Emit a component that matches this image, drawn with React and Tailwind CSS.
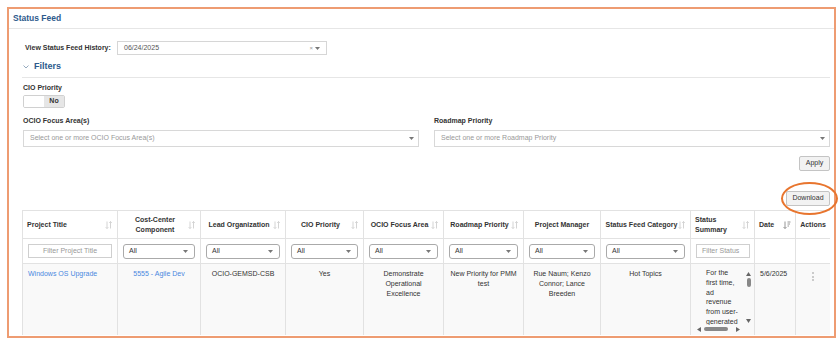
import React from 'react';

const font = "font-['Liberation_Sans',Arial,sans-serif]";

function SortIcon({ active }) {
  if (active) {
    return (
      <svg width="8" height="8" viewBox="0 0 8 8" className="shrink-0">
        <path d="M2 0.5 V7.5 M0.5 6 L2 7.5 L3.5 6" stroke="#8a8a8a" strokeWidth="0.9" fill="none" />
        <path d="M4.5 1 H7.5 M4.5 3 H7 M4.5 5 H6" stroke="#8a8a8a" strokeWidth="0.9" fill="none" />
      </svg>
    );
  }
  return (
    <svg width="8" height="8" viewBox="0 0 8 8" className="shrink-0">
      <path d="M2 0.5 V7.5 M0.7 6.2 L2 7.5 L3.3 6.2" stroke="#cfcfcf" strokeWidth="0.9" fill="none" />
      <path d="M5.5 7.5 V0.5 M4.2 1.8 L5.5 0.5 L6.8 1.8" stroke="#cfcfcf" strokeWidth="0.9" fill="none" />
    </svg>
  );
}

function Caret() {
  return (
    <svg width="5" height="3" viewBox="0 0 5 3">
      <path d="M0 0 H5 L2.5 3 Z" fill="#777" />
    </svg>
  );
}

function SelectAll() {
  return (
    <div className="mx-[5px] h-[15px] border border-[#aaa] rounded-[3px] bg-white flex items-center justify-between pl-[5px] pr-[6px]">
      <span className="text-[7px] text-[#333]">All</span>
      <Caret />
    </div>
  );
}

const columns = [
  { title: 'Project Title', w: 95, sort: true, align: 'left' },
  { title: ['Cost-Center', 'Component'], w: 83, sort: true },
  { title: 'Lead Organization', w: 85, sort: true },
  { title: 'CIO Priority', w: 78, sort: true },
  { title: 'OCIO Focus Area', w: 80, sort: true },
  { title: 'Roadmap Priority', w: 80, sort: true },
  { title: 'Project Manager', w: 77, sort: false },
  { title: 'Status Feed Category', w: 90, sort: true },
  { title: ['Status', 'Summary'], w: 64, sort: true, align: 'left' },
  { title: 'Date', w: 41, sort: true, align: 'left', active: true },
  { title: 'Actions', w: 35, sort: false },
];

function HeaderCell({ col }) {
  const lines = Array.isArray(col.title) ? col.title : [col.title];
  return (
    <th className="border border-[#e2e2e2] p-0 h-[28px] align-middle font-bold">
      <div className="flex items-center h-full pl-[4px] pr-[4px]">
        <div className={'flex-1 leading-[10px] ' + (col.align === 'left' ? 'text-left' : 'text-center')}>
          {lines.map((l) => (
            <div key={l}>{l}</div>
          ))}
        </div>
        {col.sort && <SortIcon active={col.active} />}
      </div>
    </th>
  );
}

function StatusSummary() {
  return (
    <div className="relative ml-[5px] mt-[-1px] w-[58px] h-[65px] overflow-hidden">
      <div className="pl-[10px] w-[45px] leading-[9.8px]">
        For the first time, ad revenue from user-generated content surpassed
      </div>
      <div className="absolute right-[2px] top-0 w-[7px] h-[57px] bg-[#f9f9f9] flex flex-col items-center">
        <svg width="5" height="4" viewBox="0 0 5 4" className="mt-[4px]">
          <path d="M0 4 H5 L2.5 0 Z" fill="#666" />
        </svg>
        <div className="mt-[2px] w-[4px] h-[9px] rounded-full bg-[#888]" />
        <div className="flex-1" />
        <svg width="5" height="4" viewBox="0 0 5 4" className="mb-[2px]">
          <path d="M0 0 H5 L2.5 4 Z" fill="#666" />
        </svg>
      </div>
      <div className="absolute left-0 bottom-0 w-[50px] h-[8px] bg-[#f9f9f9] flex items-center">
        <svg width="4" height="5" viewBox="0 0 4 5" className="ml-[1px]">
          <path d="M4 0 V5 L0 2.5 Z" fill="#666" />
        </svg>
        <div className="ml-[3px] w-[24px] h-[4px] rounded-full bg-[#888]" />
        <div className="flex-1" />
        <svg width="4" height="5" viewBox="0 0 4 5" className="mr-[6px]">
          <path d="M0 0 V5 L4 2.5 Z" fill="#666" />
        </svg>
      </div>
    </div>
  );
}

export default function App() {
  return (
    <div className={'w-[839px] h-[341px] bg-white overflow-hidden pt-[7px] pl-[7px] text-[#333] ' + font}>
      <div className="w-[829px] h-[331px] border-2 border-[#ee9c72]">
        <div className="h-[20px] border-b border-[#e6e6e6] flex items-center pl-[4px]">
          <span className="text-[8.5px] font-bold text-[#2d5a8c]">Status Feed</span>
        </div>

        <div className="pl-[13px] pr-[4px]">
          <div className="mt-[12px] flex items-center h-[14px]">
            <span className="ml-[3px] w-[92px] text-[7px] font-bold">View Status Feed History:</span>
            <div className="w-[210px] h-[14px] border border-[#d6d6d6] flex items-center justify-between pl-[6px] pr-[6px]">
              <span className="text-[7px] text-[#555]">06/24/2025</span>
              <span className="flex items-center gap-[2px] text-[6px] text-[#999]">
                ×
                <Caret />
              </span>
            </div>
          </div>

          <div className="mt-[5px] h-[14px] flex items-center">
            <svg width="6" height="4" viewBox="0 0 6 4" className="ml-[1px]">
              <path d="M0.5 0.5 L3 3 L5.5 0.5" stroke="#8aa0b8" strokeWidth="0.9" fill="none" />
            </svg>
            <span className="ml-[5px] text-[9px] font-bold text-[#2d5a8c]">Filters</span>
          </div>
          <div className="mt-[3px] border-b border-[#e6e6e6]" />

          <div className="mt-[6px] text-[7px] font-bold leading-[8px] pl-[1px]">CIO Priority</div>
          <div className="mt-[3px] ml-[1px] w-[42px] h-[13px] border border-[#d0d0d0] rounded-[2px] flex overflow-hidden">
            <div className="w-[20px] bg-white" />
            <div className="flex-1 bg-[#e6e6e6] flex items-center justify-center text-[7px] font-bold">No</div>
          </div>

          <div className="mt-[9px] grid grid-cols-2 gap-[15px] pl-[1px]">
            <div>
              <div className="text-[7px] font-bold leading-[8px]">OCIO Focus Area(s)</div>
              <div className="mt-[5px] h-[17px] border border-[#d8d8d8] flex items-center justify-between pl-[6px] pr-[4px]">
                <span className="text-[7px] text-[#999]">Select one or more OCIO Focus Area(s)</span>
                <Caret />
              </div>
            </div>
            <div>
              <div className="text-[7px] font-bold leading-[8px]">Roadmap Priority</div>
              <div className="mt-[5px] h-[17px] border border-[#d8d8d8] flex items-center justify-between pl-[6px] pr-[4px]">
                <span className="text-[7px] text-[#999]">Select one or more Roadmap Priority</span>
                <Caret />
              </div>
            </div>
          </div>

          <div className="mt-[9px] flex justify-end">
            <button className="w-[31px] h-[15px] border border-[#c4c4c4] rounded-[2px] bg-[#f2f2f2] text-[7px] text-[#333]">
              Apply
            </button>
          </div>

          <div className="mt-[20px] flex justify-end">
            <div className="relative flex">
              <button className="w-[44px] h-[15px] border border-[#c4c4c4] rounded-[2px] bg-[#f2f2f2] text-[7px] text-[#333]">
                Download
              </button>
              <div className="absolute left-[-5px] top-[-9px] w-[57px] h-[33px] rounded-[50%] border-2 border-[#e8752e]" />
            </div>
          </div>

          <div className="mt-[4px] h-[125px] overflow-hidden">
            <table className="table-fixed border-collapse w-[808px] text-[7px]">
              <colgroup>
                {columns.map((c, i) => (
                  <col key={i} style={{ width: c.w }} />
                ))}
              </colgroup>
              <thead>
                <tr>
                  {columns.map((c, i) => (
                    <HeaderCell key={i} col={c} />
                  ))}
                </tr>
              </thead>
              <tbody>
                <tr className="h-[25px] bg-white">
                  <td className="border border-[#e2e2e2] px-[5px]">
                    <div className="h-[14px] border border-[#cfcfcf] flex items-center justify-center text-[7px] text-[#999]">
                      Filter Project Title
                    </div>
                  </td>
                  {[1, 2, 3, 4, 5, 6, 7].map((k) => (
                    <td key={k} className="border border-[#e2e2e2] p-0">
                      <SelectAll />
                    </td>
                  ))}
                  <td className="border border-[#e2e2e2] pl-[5px] pr-[4px]">
                    <div className="h-[14px] border border-[#cfcfcf] flex items-center pl-[5px] overflow-hidden whitespace-nowrap text-[7px] text-[#999]">
                      Filter Status
                    </div>
                  </td>
                  <td className="border border-[#e2e2e2]" />
                  <td className="border border-[#e2e2e2]" />
                </tr>
                <tr className="h-[120px] bg-[#f9f9f9] align-top leading-[10px]">
                  <td className="border border-[#e2e2e2] px-[5px] pt-[5px] text-[#4a88df]">Windows OS Upgrade</td>
                  <td className="border border-[#e2e2e2] px-[5px] pt-[5px] text-center text-[#4a88df]">5555 - Agile Dev</td>
                  <td className="border border-[#e2e2e2] px-[5px] pt-[5px] text-center">OCIO-GEMSD-CSB</td>
                  <td className="border border-[#e2e2e2] px-[5px] pt-[5px] text-center">Yes</td>
                  <td className="border border-[#e2e2e2] px-[12px] pt-[5px] text-center">Demonstrate Operational Excellence</td>
                  <td className="border border-[#e2e2e2] px-[5px] pt-[5px] text-center">New Priority for PMM test</td>
                  <td className="border border-[#e2e2e2] px-[8px] pt-[5px] text-center">Rue Naum; Kenzo Connor; Lance Breeden</td>
                  <td className="border border-[#e2e2e2] px-[5px] pt-[5px] text-center">Hot Topics</td>
                  <td className="border border-[#e2e2e2] p-0 pt-[5px]">
                    <StatusSummary />
                  </td>
                  <td className="border border-[#e2e2e2] px-[5px] pt-[5px]">5/6/2025</td>
                  <td className="border border-[#e2e2e2] pt-[8px]">
                    <div className="flex flex-col items-center gap-[1.5px]">
                      <div className="w-[2px] h-[2px] rounded-full bg-[#bbb]" />
                      <div className="w-[2px] h-[2px] rounded-full bg-[#bbb]" />
                      <div className="w-[2px] h-[2px] rounded-full bg-[#bbb]" />
                    </div>
                  </td>
                </tr>
              </tbody>
            </table>
          </div>
        </div>
      </div>
    </div>
  );
}
